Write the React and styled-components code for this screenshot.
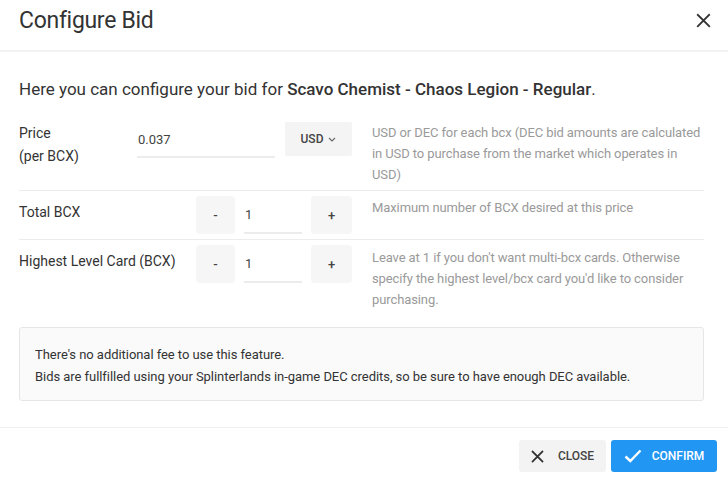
import styled, { createGlobalStyle } from 'styled-components';

const Global = createGlobalStyle`
  html, body {
    margin: 0;
    padding: 0;
    background: #fff;
    font-family: Roboto, "Liberation Sans", sans-serif;
    color: #333;
  }
  * { box-sizing: border-box; }
`;

const Modal = styled.div`
  width: 728px;
  height: 481px;
  display: flex;
  flex-direction: column;
  background: #fff;
  overflow: hidden;
`;

// HEADER
const Header = styled.header`
  height: 52px;
  display: flex;
  align-items: center;
  justify-content: space-between;
  padding: 0 16px 9px 19px;
  border-bottom: 2px solid #f2f2f2;
`;

const Title = styled.h2`
  margin: 0;
  font-size: 23px;
  font-weight: 400;
  color: #333;
  letter-spacing: -0.3px;
`;

const IconButton = styled.button`
  border: 0;
  background: none;
  padding: 0;
  width: 18px;
  height: 18px;
  display: flex;
  align-items: center;
  justify-content: center;
  cursor: pointer;
`;

// BODY
const Body = styled.div`
  flex: 1;
  padding: 25px 24px 0 19px;
  border-bottom: 1px solid #f0f0f0;
`;

const Intro = styled.p`
  margin: 0 0 16px;
  font-size: 17px;
  line-height: 24px;
  color: #333;

  strong {
    font-weight: 500;
  }
`;

const Row = styled.div`
  display: grid;
  grid-template-columns: 98px 215px 1fr;
  column-gap: 20px;
  align-items: start;
  padding: 5px 0;
  border-bottom: ${({ $last }) => ($last ? 'none' : '1px solid #ececec')};
`;

const Label = styled.div`
  font-size: 14px;
  line-height: 22px;
  color: #333;
  padding-top: ${({ $pad }) => $pad}px;
  white-space: nowrap;

  small {
    display: block;
    font-size: 14px;
    line-height: 24px;
  }
`;

const Controls = styled.div`
  display: flex;
  align-items: flex-start;
  justify-content: ${({ $end }) => ($end ? 'flex-end' : 'flex-start')};
  gap: 10px;
`;

const TextInput = styled.input`
  width: ${({ $w }) => $w}px;
  height: ${({ $h }) => $h}px;
  border: 0;
  border-bottom: 2px solid #ececec;
  outline: none;
  padding: 0 1px;
  font-family: inherit;
  font-size: 13px;
  color: #444;
  background: transparent;
`;

const Stepper = styled.div`
  display: flex;
  align-items: flex-start;
  gap: 9px;
`;

const StepButton = styled.button`
  width: ${({ $w }) => $w}px;
  height: 38px;
  border: 0;
  border-radius: 4px;
  background: #f6f6f6;
  font-family: inherit;
  font-size: 13px;
  font-weight: 500;
  color: #444;
  padding: 0;
  cursor: pointer;
`;

const SelectButton = styled.button`
  width: 68px;
  height: 34px;
  border: 0;
  border-radius: 2px;
  background: #f4f4f4;
  display: flex;
  align-items: center;
  justify-content: center;
  gap: 5px;
  font-family: inherit;
  font-size: 12px;
  font-weight: 500;
  color: #444;
  padding: 0;
`;

const Desc = styled.div`
  font-size: 13px;
  line-height: 21px;
  letter-spacing: -0.1px;
  color: #9a9a9a;
  padding-top: ${({ $pad }) => $pad || 0}px;
`;

const InfoBox = styled.div`
  margin-top: 12px;
  border: 1px solid #e6e6e6;
  border-radius: 3px;
  background: #fafafa;
  padding: 16px 15px 12px;
  font-size: 13px;
  line-height: 22px;
  letter-spacing: -0.05px;
  color: #333;

  p {
    margin: 0;
  }
`;

// FOOTER
const Footer = styled.footer`
  display: flex;
  justify-content: flex-end;
  gap: 5px;
  padding: 12px 11px 9px;
`;

const ActionButton = styled.button`
  height: 32px;
  width: ${({ $w }) => $w}px;
  border: 0;
  border-radius: 3px;
  display: flex;
  align-items: center;
  justify-content: center;
  gap: ${({ $gap }) => $gap}px;
  font-family: inherit;
  font-size: 12px;
  font-weight: 500;
  text-transform: uppercase;
  background: ${({ $primary }) => ($primary ? '#2196f3' : '#f3f3f3')};
  color: ${({ $primary }) => ($primary ? '#fff' : '#444')};
  cursor: pointer;
`;

const XIcon = ({ size = 15, color = '#333', stroke = 2 }) => (
  <svg width={size} height={size} viewBox="0 0 16 16">
    <path d="M2 2 L14 14 M14 2 L2 14" stroke={color} strokeWidth={stroke} strokeLinecap="square" fill="none" />
  </svg>
);

const CheckIcon = () => (
  <svg width="18" height="14" viewBox="0 0 18 14">
    <path d="M1.5 7.5 L6.3 12 L16.5 1.5" stroke="#fff" strokeWidth="2.4" fill="none" />
  </svg>
);

const Chevron = () => (
  <svg width="8" height="5" viewBox="0 0 8 5">
    <path d="M1 1 L4 4 L7 1" stroke="#666" strokeWidth="1.1" fill="none" />
  </svg>
);

const App = () => (
  <>
    <Global />
    <Modal>
      <Header>
        <Title>Configure Bid</Title>
        <IconButton aria-label="close">
          <XIcon size={15} color="#333" stroke={2} />
        </IconButton>
      </Header>
      <Body>
        <Intro>
          Here you can configure your bid for <strong>Scavo Chemist - Chaos Legion - Regular</strong>.
        </Intro>

        <Row>
          <Label $pad={0}>
            Price
            <small>(per BCX)</small>
          </Label>
          <Controls>
            <TextInput $w={138} $h={36} defaultValue="0.037" />
            <SelectButton>
              USD <Chevron />
            </SelectButton>
          </Controls>
          <Desc $pad={0}>
            USD or DEC for each bcx (DEC bid amounts are calculated in USD to purchase from the market which
            operates in USD)
          </Desc>
        </Row>

        <Row>
          <Label $pad={5}>Total BCX</Label>
          <Controls $end>
            <Stepper>
              <StepButton $w={39}>-</StepButton>
              <TextInput $w={58} $h={38} defaultValue="1" />
              <StepButton $w={41}>+</StepButton>
            </Stepper>
          </Controls>
          <Desc $pad={1}>Maximum number of BCX desired at this price</Desc>
        </Row>

        <Row $last>
          <Label $pad={5}>Highest Level Card (BCX)</Label>
          <Controls $end>
            <Stepper>
              <StepButton $w={39}>-</StepButton>
              <TextInput $w={58} $h={38} defaultValue="1" />
              <StepButton $w={41}>+</StepButton>
            </Stepper>
          </Controls>
          <Desc $pad={2}>
            Leave at 1 if you don't want multi-bcx cards. Otherwise specify the highest level/bcx card you'd like to
            consider purchasing.
          </Desc>
        </Row>

        <InfoBox>
          <p>There's no additional fee to use this feature.</p>
          <p>Bids are fullfilled using your Splinterlands in-game DEC credits, so be sure to have enough DEC available.</p>
        </InfoBox>
      </Body>
      <Footer>
        <ActionButton $w={87} $gap={14}>
          <XIcon size={13} color="#333" stroke={2.2} />
          Close
        </ActionButton>
        <ActionButton $w={106} $gap={10} $primary>
          <CheckIcon />
          Confirm
        </ActionButton>
      </Footer>
    </Modal>
  </>
);

export default App;
